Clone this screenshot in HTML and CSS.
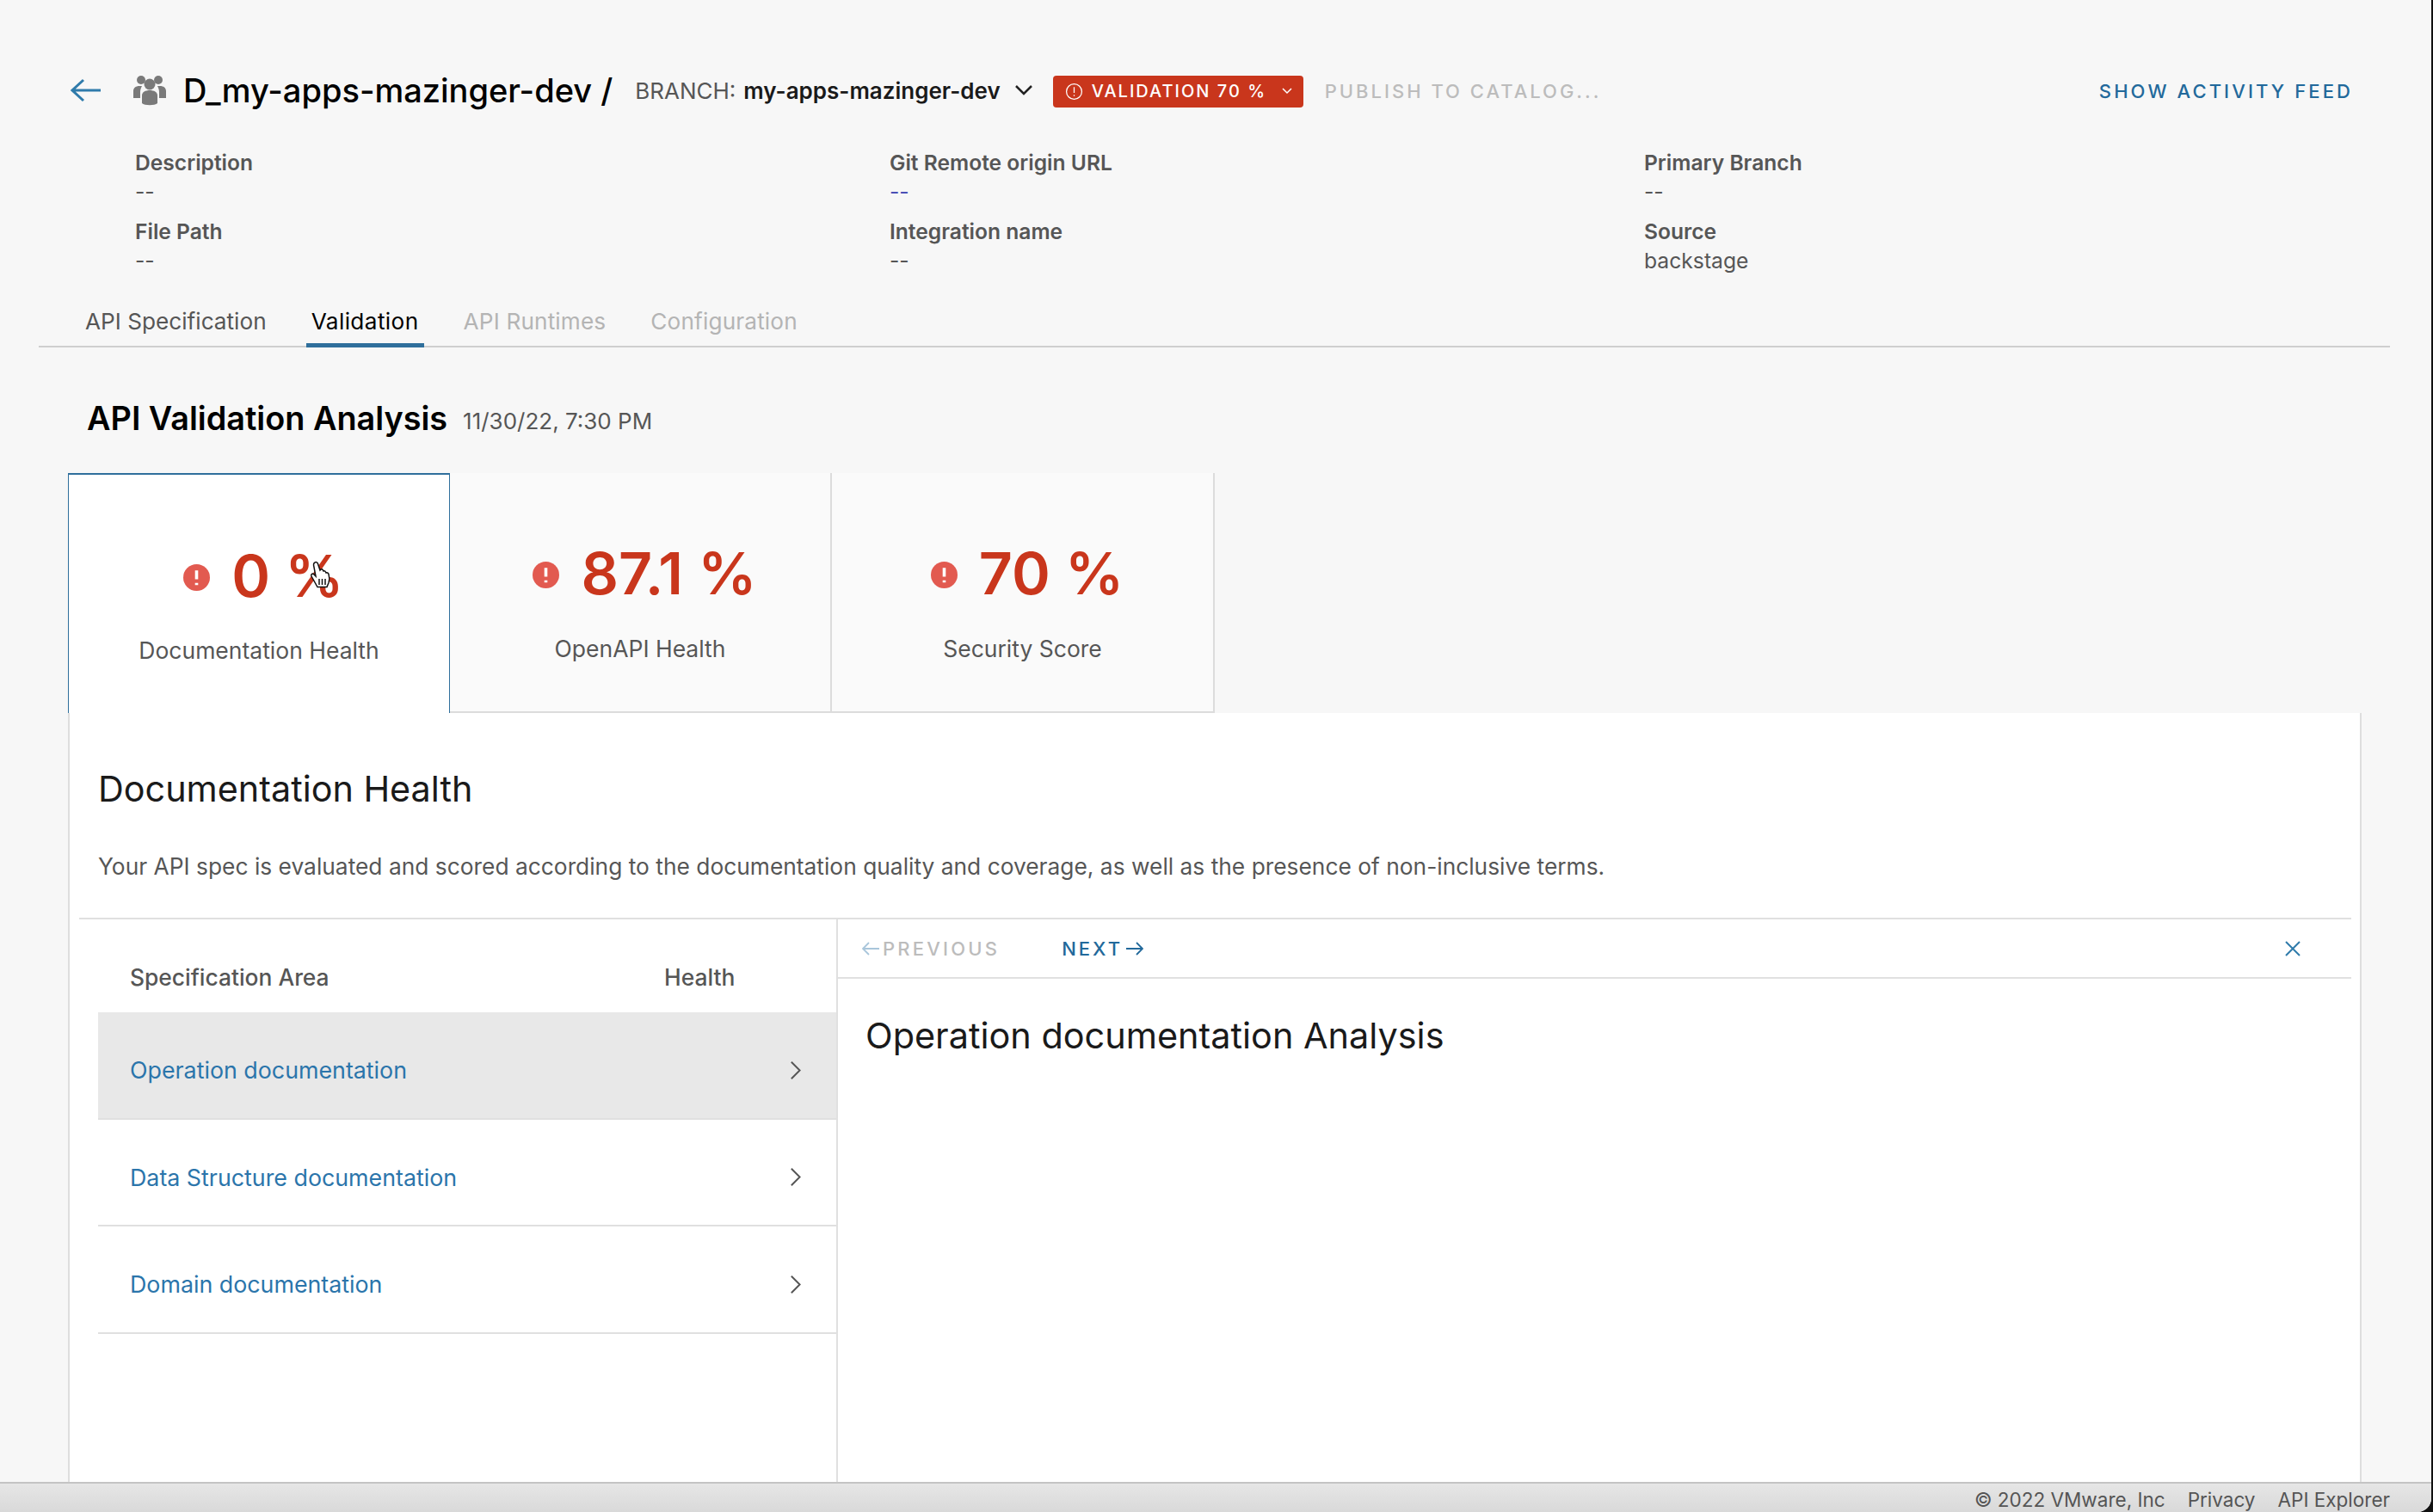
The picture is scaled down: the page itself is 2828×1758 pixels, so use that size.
FILE: index.html
```html
<!DOCTYPE html>
<html lang="en">
<head>
  <meta charset="UTF-8" />
  <meta name="viewport" content="width=device-width, initial-scale=1" />
  <title>API Validation Analysis</title>
  <link rel="stylesheet" href="styles.css">
</head>
<body>
  <div class="app">
    <main>
      <div class="topbar">
        <svg class="back" viewBox="0 0 36 30"><path d="M15 3 2 15l13 12M2 15h33" /></svg>
        <svg class="people" viewBox="0 0 38 36">
          <circle cx="9" cy="6" r="5" />
          <circle cx="29" cy="6" r="5" />
          <path d="M0 27v-8c0-4 3-6 7-6h3c-1 2-2 4-2 7v7z" />
          <path d="M38 27v-8c0-4-3-6-7-6h-3c1 2 2 4 2 7v7z" />
          <circle cx="19" cy="11" r="6.5" />
          <path d="M10 33V24c0-4 4-6 9-6s9 2 9 6v9c-3 3-15 3-18 0z" />
        </svg>
        <span class="app-name">D_my-apps-mazinger-dev /</span>
        <span class="branch">BRANCH:</span>
        <span class="branch-name">my-apps-mazinger-dev</span>
        <svg class="branch-caret" viewBox="0 0 20 12"><path d="M1 1l9 9 9-9" /></svg>
        <button class="badge" type="button">
          <svg class="badge-icon" viewBox="0 0 20 20"><circle cx="10" cy="10" r="8.5" /><path d="M10 5v6.5M10 13.5v1.5" /></svg>
          VALIDATION 70 %
          <svg class="badge-caret" viewBox="0 0 12 8"><path d="M1 1l5 5 5-5" /></svg>
        </button>
        <span class="publish">PUBLISH TO CATALOG...</span>
        <a class="feed">SHOW ACTIVITY FEED</a>
      </div>

      <div class="meta">
        <div><h4>Description</h4><p>--</p></div>
        <div><h4>Git Remote origin URL</h4><p class="link">--</p></div>
        <div><h4>Primary Branch</h4><p>--</p></div>
        <div><h4>File Path</h4><p>--</p></div>
        <div><h4>Integration name</h4><p>--</p></div>
        <div><h4>Source</h4><p>backstage</p></div>
      </div>

      <nav class="tabs">
        <a class="tab">API Specification</a>
        <a class="tab active">Validation</a>
        <a class="tab off">API Runtimes</a>
        <a class="tab off">Configuration</a>
      </nav>

      <div class="title-row">
        <h1>API Validation Analysis</h1>
        <span class="date">11/30/22, 7:30 PM</span>
      </div>

      <div class="cards">
        <div class="card selected">
          <div class="score">
            <svg class="alert" viewBox="0 0 30 30"><circle cx="15" cy="15" r="15" /><path d="M15 7v10M15 21v2.5" /></svg>
            <span>0 %</span>
          </div>
          <div class="card-label">Documentation Health</div>
          <svg class="hand" viewBox="0 0 26 32">
            <path d="M7 2c1.500-1 3 0 3.500 1.500L13 11l1-1c1-.5 2 0 2.500 1l.5 1c1-.5 2 0 2.500 1l.5 1c1-.5 2.500 0 3 1.500 1 3 1 7 0 10l-2 5H10L3 18c-1-2 1-3.500 2.500-2.500L8 18 5.500 5C5.300 3.500 6 2.500 7 2z" />
            <path d="M12 21v7M15.500 21v7M19 21v7" />
          </svg>
        </div>
        <div class="card">
          <div class="score">
            <svg class="alert" viewBox="0 0 30 30"><circle cx="15" cy="15" r="15" /><path d="M15 7v10M15 21v2.5" /></svg>
            <span>87.1 %</span>
          </div>
          <div class="card-label">OpenAPI Health</div>
        </div>
        <div class="card">
          <div class="score">
            <svg class="alert" viewBox="0 0 30 30"><circle cx="15" cy="15" r="15" /><path d="M15 7v10M15 21v2.5" /></svg>
            <span>70 %</span>
          </div>
          <div class="card-label">Security Score</div>
        </div>
      </div>

      <section class="panel">
        <h2>Documentation Health</h2>
        <p class="desc">Your API spec is evaluated and scored according to the documentation quality and coverage, as well as the presence of non-inclusive terms.</p>

        <div class="split">
          <div class="areas">
            <div class="areas-head">
              <span>Specification Area</span>
              <span>Health</span>
            </div>
            <a class="area current">Operation documentation
              <svg class="chev" viewBox="0 0 12 20"><path d="M1.500 1.500 10 10l-8.500 8.500" /></svg>
            </a>
            <a class="area">Data Structure documentation
              <svg class="chev" viewBox="0 0 12 20"><path d="M1.500 1.500 10 10l-8.500 8.500" /></svg>
            </a>
            <a class="area">Domain documentation
              <svg class="chev" viewBox="0 0 12 20"><path d="M1.500 1.500 10 10l-8.500 8.500" /></svg>
            </a>
          </div>
          <div class="detail">
            <div class="pager">
              <span class="prev">
                <svg viewBox="0 0 20 16"><path d="M8 1 1 8l7 7M1 8h19" /></svg>
                PREVIOUS
              </span>
              <span class="next">
                NEXT
                <svg viewBox="0 0 20 16"><path d="M12 1l7 7-7 7M19 8H0" /></svg>
              </span>
              <svg class="close" viewBox="0 0 18 18"><path d="M1 1l16 16M17 1 1 17" /></svg>
            </div>
            <h3>Operation documentation Analysis</h3>
          </div>
        </div>
      </section>
    </main>

    <footer>
      <span>&copy; 2022 VMware, Inc</span>
      <a>Privacy</a>
      <a>API Explorer</a>
    </footer>
  </div>
</body>
</html>
```

FILE: styles.css
```css
* {
  box-sizing: border-box;
}
html, body {
  margin: 0;
  padding: 0;
  height: 100%;
}
body {
  font-family: Inter, 'Open Sans', sans-serif;
  background-color: #111;
  color: #565656;
}
a {
  text-decoration: none;
}
.app {
  height: 1758px;
  margin-right: 2px;
  background-color: #f7f7f7;
  border-bottom-right-radius: 16px;
  overflow: hidden;
  display: flex;
  flex-direction: column;
}
main {
  flex: 1;
  min-height: 0;
  display: flex;
  flex-direction: column;
}

/* top bar */
.topbar {
  height: 50px;
  margin-top: 80px;
  padding-left: 82px;
  display: flex;
  align-items: center;
}
.back {
  width: 36px;
  height: 30px;
  fill: none;
  stroke: #2f7bab;
  stroke-width: 3;
}
.people {
  width: 38px;
  height: 36px;
  margin-left: 37px;
  fill: #7a7a7a;
}
.app-name {
  margin-left: 20px;
  font-size: 38px;
  font-weight: 500;
  color: #000;
}
.branch {
  margin-left: 26px;
  font-size: 26px;
  color: #565656;
}
.branch-name {
  margin-left: 9px;
  font-size: 26px;
  font-weight: 600;
  color: #1a1a1a;
}
.branch-caret {
  width: 20px;
  height: 12px;
  margin-left: 17px;
  fill: none;
  stroke: #222;
  stroke-width: 2.500;
}
.badge {
  height: 37px;
  width: 291px;
  margin: 2px 0 0 24px;
  padding: 0 0 0 14px;
  display: flex;
  align-items: center;
  border: none;
  border-radius: 4px;
  background-color: #c9361c;
  color: #fff;
  font-family: inherit;
  font-size: 20px;
  font-weight: 500;
  letter-spacing: 2px;
}
.badge-icon {
  width: 21px;
  height: 21px;
  margin-right: 10px;
  fill: none;
  stroke: #fff;
  stroke-width: 1.200;
}
.badge-caret {
  width: 12px;
  height: 8px;
  margin-left: 18px;
  fill: none;
  stroke: #fff;
  stroke-width: 1.500;
}
.publish {
  margin: 2px 0 0 25px;
  font-size: 22px;
  font-weight: 500;
  letter-spacing: 3px;
  color: #bcbcbc;
}
.feed {
  margin: 2px 91px 0 auto;
  font-size: 22px;
  font-weight: 500;
  letter-spacing: 3.100px;
  color: #22699b;
}

/* meta grid */
.meta {
  margin-top: 43px;
  padding-left: 157px;
  display: grid;
  grid-template-columns: 877px 877px 1fr;
  row-gap: 14px;
}
.meta h4 {
  margin: 0;
  font-size: 24.600px;
  line-height: 32px;
  font-weight: 600;
  color: #565656;
}
.meta p {
  margin: 2px 0 0;
  font-size: 24.700px;
  line-height: 32px;
  color: #565656;
}
.meta p.link {
  color: #4a4fb5;
}

/* tabs */
.tabs {
  height: 63px;
  margin: 22px 48px 0 45px;
  padding-left: 48px;
  display: flex;
  gap: 40px;
  border-bottom: 2px solid #cfcfcf;
}
.tab {
  height: 63px;
  padding: 0 6px;
  font-size: 26.200px;
  line-height: 65px;
  color: #565656;
}
.tab.active {
  color: #000;
  letter-spacing: .4px;
  border-bottom: 5px solid #2f6f9c;
}
.tab.off {
  color: #b4b4b4;
  letter-spacing: .15px;
}

/* title */
.title-row {
  height: 64px;
  margin: 50px 0 32px;
  padding-left: 101px;
  display: flex;
  align-items: center;
  gap: 18px;
}
h1 {
  margin: 0;
  font-size: 37.800px;
  font-weight: 600;
  color: #000;
}
.date {
  margin-top: 6px;
  font-size: 26px;
  color: #565656;
}

/* score cards */
.cards {
  height: 279px;
  margin-left: 79px;
  display: flex;
}
.card {
  position: relative;
  width: 444px;
  padding-top: 74px;
  background-color: #fafafa;
  border-right: 2px solid #dcdcdc;
  border-bottom: 2px solid #dcdcdc;
  text-align: center;
}
.card:last-child {
  width: 445px;
}
.card.selected {
  padding-top: 75px;
  background-color: #fff;
  border: 1px solid #2f6f9c;
  border-top-width: 2px;
  border-bottom: none;
}
.score {
  height: 84px;
  padding-left: 11px;
  display: flex;
  align-items: center;
  justify-content: center;
  gap: 25px;
  font-size: 68px;
  font-weight: 600;
  color: #c9361c;
}
.alert {
  width: 31px;
  height: 31px;
  margin-top: 4px;
  fill: #e25a50;
  stroke: #fff;
  stroke-width: 3.500;
}
.alert circle {
  stroke: none;
}
.card-label {
  margin-top: 28px;
  font-size: 26.500px;
  line-height: 36px;
  color: #565656;
}
.selected .card-label {
  margin-top: 27px;
}
.hand {
  position: absolute;
  left: 279px;
  top: 100px;
  width: 26px;
  height: 32px;
  fill: #fff;
  stroke: #111;
  stroke-width: 1.500;
}

/* panel */
.panel {
  flex: 1;
  min-height: 0;
  width: 2666px;
  margin-left: 79px;
  display: flex;
  flex-direction: column;
  background-color: #fff;
  border-left: 2px solid #dedede;
  border-right: 2px solid #dedede;
}
h2 {
  margin: 59px 0 0;
  padding-left: 33px;
  font-size: 41.300px;
  line-height: 58px;
  font-weight: 400;
  color: #1a1a1a;
}
.desc {
  margin: 41px 0 40px;
  padding-left: 33px;
  font-size: 26.350px;
  line-height: 40px;
  color: #565656;
}
.split {
  flex: 1;
  min-height: 0;
  width: 2641px;
  margin-left: 11px;
  display: flex;
  border-top: 2px solid #e0e0e0;
}
.areas {
  width: 882px;
  padding-left: 22px;
  border-right: 2px solid #e0e0e0;
}
.areas-head {
  height: 108px;
  padding: 47px 0 0 37px;
  display: grid;
  grid-template-columns: 621px 1fr;
  font-size: 26.400px;
  line-height: 40px;
  font-weight: 500;
}
.area {
  height: 124.600px;
  padding: 12px 40px 0 37px;
  display: flex;
  align-items: center;
  justify-content: space-between;
  border-bottom: 2px solid #e0e0e0;
  font-size: 26.800px;
  color: #2b75ab;
}
.area.current {
  background-color: #e8e8e8;
}
.chev {
  width: 14px;
  height: 23px;
  fill: none;
  stroke: #555;
  stroke-width: 1.700;
}
.detail {
  flex: 1;
}
.pager {
  height: 69px;
  padding: 0 59px 0 28px;
  display: flex;
  align-items: center;
  border-bottom: 2px solid #e0e0e0;
  font-size: 22px;
  font-weight: 500;
}
.pager svg {
  fill: none;
  stroke-width: 1.800;
}
.prev, .next {
  display: flex;
  align-items: center;
  gap: 4px;
}
.prev {
  letter-spacing: 3.200px;
  color: #bcbcbc;
}
.prev svg {
  width: 20px;
  height: 16px;
  stroke: #a9c6db;
}
.next {
  margin-left: 72px;
  letter-spacing: 3px;
  color: #22699b;
}
.next svg {
  width: 20px;
  height: 16px;
  stroke: #22699b;
}
.pager .close {
  width: 18px;
  height: 18px;
  margin-left: auto;
  stroke: #2f7bab;
  stroke-width: 2;
}
h3 {
  margin: 38px 0 0;
  padding-left: 32px;
  font-size: 41.400px;
  line-height: 56px;
  font-weight: 400;
  color: #1a1a1a;
}

/* footer */
footer {
  height: 35px;
  padding: 4px 48px 0 0;
  display: flex;
  align-items: center;
  justify-content: flex-end;
  gap: 26px;
  border-top: 2px solid #c4c4c4;
  background: linear-gradient(#e6e6e6, #d9d9d9);
  font-size: 22.500px;
  color: #555;
}
```
